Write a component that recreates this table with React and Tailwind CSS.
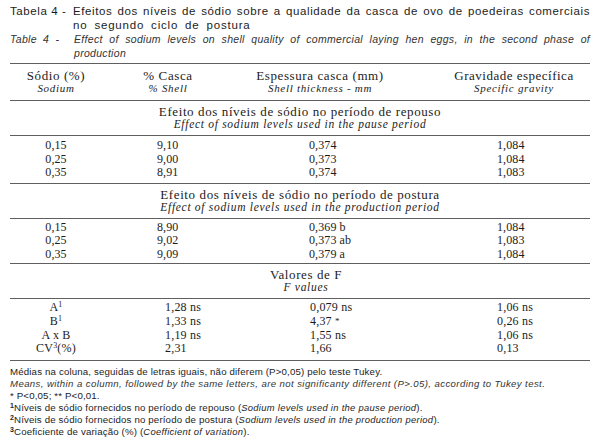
import React from "react";

const serif = "font-['Liberation_Serif','Times_New_Roman',serif]";
const sans = "font-['Liberation_Sans',Arial,sans-serif]";

function Rule() {
  return <div className="h-px bg-[#5f5f5f]" />;
}

function Section({ pt, en, shift = "" }) {
  return (
    <div className={`${serif} text-center pt-[4px] pb-[4px] ${shift}`}>
      <div className="text-[13px] leading-[13px] tracking-[0.6px]">{pt}</div>
      <div className="text-[11.5px] leading-[13px] italic tracking-[0.7px]">{en}</div>
    </div>
  );
}

function DataRow({ a, b, c, d }) {
  return (
    <div className="grid grid-cols-[92px_132px_172px_184px] text-[12px] leading-[13.5px] tracking-[0.1px]">
      <div className="text-center">{a}</div>
      <div className="pl-[55px]">{b}</div>
      <div className="pl-[75px]">{c}</div>
      <div className="pl-[91px]">{d}</div>
    </div>
  );
}

function FRow({ a, b, c, d }) {
  return (
    <div className="grid grid-cols-[92px_132px_172px_184px] text-[12px] leading-[13.8px] tracking-[0.2px]">
      <div className="text-center">{a}</div>
      <div className="pl-[63px]">{b}</div>
      <div className="pl-[76px]">{c}</div>
      <div className="pl-[91px]">{d}</div>
    </div>
  );
}

export default function App() {
  return (
    <div className="w-[600px] h-[447px] bg-white text-[#1c1c1c] overflow-hidden">
      <div className="px-[10px] pt-[4px]">
        <div className={`${sans} text-[11.5px] leading-[14px] tracking-[0.6px]`}>
          <div className="flex">
            <span className="w-[63px] shrink-0">Tabela 4 -</span>
            <span className="flex-1 text-justify [text-align-last:justify]">
              Efeitos dos níveis de sódio sobre a qualidade da casca de ovo de poedeiras comerciais
            </span>
          </div>
          <div className="pl-[63px] [word-spacing:3px] tracking-[0.8px]">no segundo ciclo de postura</div>
        </div>
        <div className={`${sans} text-[10.5px] leading-[14px] italic tracking-[0.3px] text-[#333]`}>
          <div className="flex">
            <span className="w-[64px] shrink-0 [word-spacing:3px]">Table 4 -</span>
            <span className="flex-1 text-justify [text-align-last:justify]">
              Effect of sodium levels on shell quality of commercial laying hen eggs, in the second phase of
            </span>
          </div>
          <div className="pl-[64px]">production</div>
        </div>

        <div className={`mt-[3px] ${serif}`}>
          <Rule />
          <div className="grid grid-cols-[92px_132px_172px_184px] pt-[5px] pb-[5px] text-center">
            <div>
              <div className="text-[13px] leading-[13px] tracking-[0.6px]">Sódio (%)</div>
              <div className="text-[11px] leading-[13px] italic tracking-[0.7px]">Sodium</div>
            </div>
            <div>
              <div className="text-[13px] leading-[13px] tracking-[0.6px]">% Casca</div>
              <div className="text-[11px] leading-[13px] italic tracking-[0.7px]">% Shell</div>
            </div>
            <div>
              <div className="text-[13px] leading-[13px] tracking-[0.6px]">Espessura casca (mm)</div>
              <div className="text-[11px] leading-[13px] italic tracking-[0.7px]">Shell thickness - mm</div>
            </div>
            <div className="pl-[32px]">
              <div className="text-[13px] leading-[13px] tracking-[0.5px]">Gravidade específica</div>
              <div className="text-[11px] leading-[13px] italic tracking-[0.7px]">Specific gravity</div>
            </div>
          </div>
          <Rule />
          <Section pt="Efeito dos níveis de sódio no período de repouso" en="Effect of sodium levels used in the pause period" />
          <Rule />
          <div className="pt-[3px] pb-[3px]">
            <DataRow a="0,15" b="9,10" c="0,374" d="1,084" />
            <DataRow a="0,25" b="9,00" c="0,373" d="1,084" />
            <DataRow a="0,35" b="8,91" c="0,374" d="1,083" />
          </div>
          <Rule />
          <Section pt="Efeito dos níveis de sódio no período de postura" en="Effect of sodium levels used in the production period" />
          <Rule />
          <div className="pt-[2px] pb-[2px]">
            <DataRow a="0,15" b="8,90" c="0,369 b" d="1,084" />
            <DataRow a="0,25" b="9,02" c="0,373 ab" d="1,083" />
            <DataRow a="0,35" b="9,09" c="0,379 a" d="1,084" />
          </div>
          <Rule />
          <Section pt="Valores de F" en="F values" shift="pl-[12px]" />
          <Rule />
          <div className="pt-[2px] pb-[4px]">
            <FRow a={<span>A<sup className="text-[8px]">1</sup></span>} b="1,28 ns" c="0,079 ns" d="1,06 ns" />
            <FRow a={<span>B<sup className="text-[8px]">1</sup></span>} b="1,33 ns" c={<span>4,37 <span className="text-[9px] align-top">*</span></span>} d="0,26 ns" />
            <FRow a="A x B" b="1,19 ns" c="1,55 ns" d="1,06 ns" />
            <FRow a={<span>CV<sup className="text-[8px]">3</sup>(%)</span>} b="2,31" c="1,66" d="0,13" />
          </div>
          <Rule />
        </div>

        <div className={`${sans} pt-[5px] text-[9.7px] leading-[12px] tracking-[0.15px]`}>
          <div>Médias na coluna, seguidas de letras iguais, não diferem (P&gt;0,05) pelo teste Tukey.</div>
          <div className="italic text-[9.6px] tracking-[0.4px] text-[#333]">Means, within a column, followed by the same letters, are not significanty different (P&gt;.05), according to Tukey test.</div>
          <div>* P&lt;0,05; ** P&lt;0,01.</div>
          <div><sup className="text-[7px] font-bold">1</sup>Níveis de sódio fornecidos no período de repouso (<span className="italic text-[9.4px] tracking-[0.3px]">Sodium levels used in the pause period</span>).</div>
          <div><sup className="text-[7px] font-bold">2</sup>Níveis de sódio fornecidos no período de postura (<span className="italic text-[9.4px] tracking-[0.3px]">Sodium levels used in the production period</span>).</div>
          <div><sup className="text-[7px] font-bold">3</sup>Coeficiente de variação (%) (<span className="italic text-[9.4px] tracking-[0.3px]">Coefficient of variation</span>).</div>
        </div>
      </div>
    </div>
  );
}
